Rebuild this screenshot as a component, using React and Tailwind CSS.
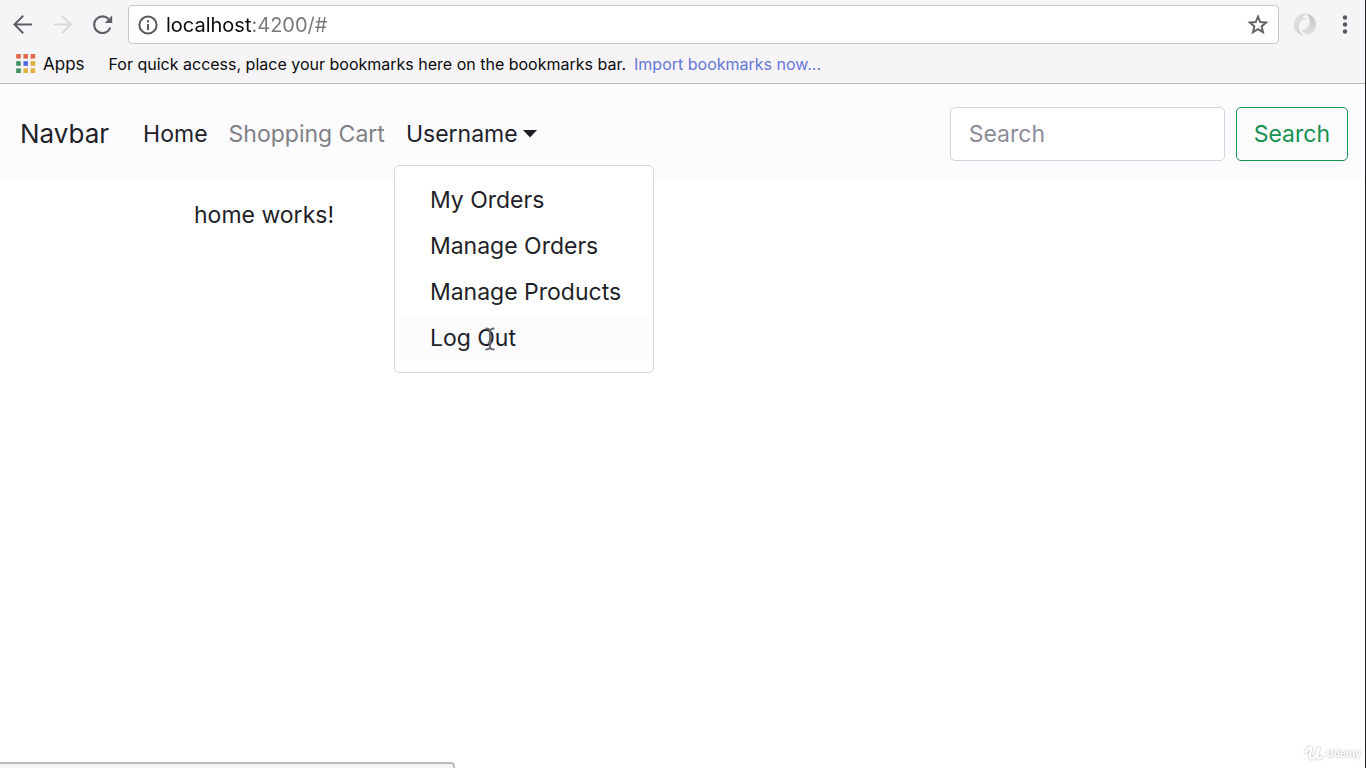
import React from "react";

const APP_DOTS = [
  ["#e0694a", "#e0694a", "#e0694a"],
  ["#3f8f63", "#4b6be0", "#e0b03c"],
  ["#3f8f63", "#e0b03c", "#e0b03c"],
];

const MENU_ITEMS = ["My Orders", "Manage Orders", "Manage Products"];

function BackIcon() {
  return (
    <svg width="22" height="22" viewBox="0 0 22 22" fill="none" stroke="currentColor" strokeWidth="2" aria-hidden="true">
      <path d="M20 10.500H3M11.2 1.800L2.5 10.500l8.7 8.7" />
    </svg>
  );
}

function ForwardIcon() {
  return (
    <svg width="22" height="22" viewBox="0 0 22 22" fill="none" stroke="currentColor" strokeWidth="2" aria-hidden="true">
      <path d="M1.500 10.500h17M10 1.800l8.7 8.7-8.7 8.7" />
    </svg>
  );
}

function ReloadIcon() {
  return (
    <svg width="22" height="22" viewBox="0 0 22 22" fill="none" aria-hidden="true">
      <path d="M18.3 13.500A8.3 8.3 0 1 1 16.500 5" stroke="currentColor" strokeWidth="2.1" />
      <path d="M20.2 1.500V9h-7.500z" fill="currentColor" />
    </svg>
  );
}

function InfoIcon() {
  return (
    <svg width="20" height="20" viewBox="0 0 20 20" fill="none" stroke="#5a5a5e" strokeWidth="2" aria-hidden="true">
      <circle cx="10" cy="10" r="8.6" />
      <path d="M10 9v6M10 5.2v2.2" />
    </svg>
  );
}

function StarIcon() {
  return (
    <svg width="22" height="22" viewBox="0 0 22 22" fill="none" stroke="#646468" strokeWidth="2" aria-hidden="true">
      <path d="M11 2.700l2.25 5.4 5.85.5-4.45 3.85 1.35 5.7-5-3.05-5 3.05 1.35-5.7L2.9 8.600l5.85-.5z" />
    </svg>
  );
}

function ExtensionIcon() {
  return (
    <svg width="24" height="24" viewBox="0 0 24 24" aria-hidden="true">
      <defs>
        <linearGradient id="ringLight" x1="0" y1="0" x2="1" y2="1">
          <stop offset="0" stopColor="#e6e5e7" />
          <stop offset="1" stopColor="#c9c8cb" />
        </linearGradient>
        <linearGradient id="ringDark" x1="0" y1="0" x2="0" y2="1">
          <stop offset="0" stopColor="#c3c2c5" />
          <stop offset="1" stopColor="#e2e1e3" />
        </linearGradient>
      </defs>
      <path d="M11.500 .5C5 .7 .8 5.500 .8 11.500c0 5 3 9 7.500 10.600 1.500.4 1.500-.3.500-1C5.500 18 5.200 12.500 7.500 9c2-3 4.500-3.500 6.500-2.500-.5-1.500-3-2-5-1.200C10 3 12 1.500 14 1.500c-1-.7-1.700-1-2.500-1z" fill="url(#ringLight)" />
      <path d="M14 .8C19.500 2 23 6 23 11.500c0 6-4 10-9.500 10.500-1.500.1-3-.2-4-.7 1.500.3 3-.1 4-1.100-3-.2-5-2-5.500-4.700 1.500 1.500 3.800 1.700 5.500.2 2.800-2.400 3.600-5.500 3-9C16 4.200 15.500 2.500 14 .8z" fill="url(#ringDark)" />
    </svg>
  );
}

function MenuDotsIcon() {
  return (
    <svg width="6" height="20" viewBox="0 0 6 20" fill="#5a5a5e" aria-hidden="true">
      <circle cx="3" cy="2.500" r="2.200" />
      <circle cx="3" cy="9.500" r="2.200" />
      <circle cx="3" cy="16.500" r="2.200" />
    </svg>
  );
}

function AppsIcon() {
  return (
    <svg width="20" height="20" viewBox="0 0 20 20" aria-hidden="true">
      {APP_DOTS.map((row, y) =>
        row.map((color, x) => (
          <rect key={`${x}-${y}`} x={x * 7.2 + 0.2} y={y * 7.2} width="4.600" height="4.600" fill={color} />
        ))
      )}
    </svg>
  );
}

function TextCursor() {
  return (
    <svg className="pointer-events-none absolute top-3 left-[89px]" width="12" height="24" viewBox="0 0 12 24" fill="none" aria-hidden="true">
      <path d="M1.500 1.500c2.500 0 4 .8 4.500 2 .5-1.200 2-2 4.500-2M6 3.500v17M1.500 22.500c2.500 0 4-.8 4.500-2 .5 1.200 2 2 4.500 2M3.800 15.500h4.400" stroke="#66666b" strokeWidth="1.900" />
    </svg>
  );
}

function BrowserChrome() {
  return (
    <header className="border-b border-[#b9b7ba] bg-[#f6f4f7]">
      <div className="flex items-center pt-[5px] pr-[17px] pl-3">
        <div className="flex items-center gap-[18px] pr-[14px] text-[#5f5f63]">
          <button type="button" aria-label="Back"><BackIcon /></button>
          <button type="button" aria-label="Forward" disabled className="text-[#d8d7da]"><ForwardIcon /></button>
          <button type="button" aria-label="Reload"><ReloadIcon /></button>
        </div>
        <div className="flex h-[39px] flex-1 items-center rounded border border-[#c9c7ca] bg-white pr-[9px] pl-[9px]">
          <InfoIcon />
          <input
            type="text"
            aria-label="Address"
            defaultValue="localhost:4200/#"
            className="ml-2 h-8 min-w-0 flex-1 bg-[linear-gradient(90deg,#0b0b0e_86px,#77777b_86px)] bg-clip-text text-[20px] leading-8 text-transparent outline-none"
          />
          <button type="button" aria-label="Bookmark this page"><StarIcon /></button>
        </div>
        <div className="flex items-center gap-[25px] pl-[14px]">
          <button type="button" aria-label="Extension"><ExtensionIcon /></button>
          <button type="button" aria-label="Browser menu"><MenuDotsIcon /></button>
        </div>
      </div>
      <div className="flex h-[39px] items-center pl-4 text-[16px] leading-5 text-[#0b0b0e]">
        <button type="button" className="flex items-center gap-[7px] text-[17px]">
          <AppsIcon />
          Apps
        </button>
        <span className="ml-6">For quick access, place your bookmarks here on the bookmarks bar.</span>
        <a href="#import" className="ml-2 text-[#6577d6]">Import bookmarks now...</a>
      </div>
    </header>
  );
}

function Navbar() {
  return (
    <nav className="flex items-center bg-[#fcfbfe] pt-[23px] pr-[17px] pb-[21px] pl-5">
      <a href="#" className="text-[26px] leading-9">Navbar</a>
      <ul className="ml-[34px] flex items-center gap-[21px]">
        <li><a href="#home">Home</a></li>
        <li><a href="#cart" className="text-[#808086]">Shopping Cart</a></li>
        <li className="relative">
          <button type="button" aria-haspopup="menu" aria-expanded="true" className="flex items-center gap-[5px]">
            Username
            <svg width="14" height="8" viewBox="0 0 14 8" fill="currentColor" aria-hidden="true"><path d="M0 0h14L7 7.500z" /></svg>
          </button>
          <ul className="absolute top-[48px] -left-3 z-10 w-[260px] rounded-[5px] border border-[#d9d8dc] bg-white py-[11px]">
            {MENU_ITEMS.map((item) => (
              <li key={item}><a href="#menu" className="block px-[35px] py-[6px] leading-[34px] whitespace-nowrap">{item}</a></li>
            ))}
            <li className="relative bg-[#fcfbfe]">
              <a href="#logout" className="block px-[35px] py-[6px] leading-[34px] whitespace-nowrap">Log Out</a>
              <TextCursor />
            </li>
          </ul>
        </li>
      </ul>
      <form className="ml-auto flex items-center gap-[11px]">
        <input
          type="search"
          aria-label="Search"
          placeholder="Search"
          className="h-[54px] w-[275px] rounded-[5px] border border-[#d4d3d8] bg-white px-[18px] outline-none placeholder:text-[#8c8c99]"
        />
        <button type="button" className="h-[54px] rounded-[5px] border border-[#159150] px-[17px] text-[#159150]">Search</button>
      </form>
    </nav>
  );
}

function Watermark() {
  return (
    <div className="fixed right-[5px] bottom-[6px] flex items-center gap-[3px] text-[10px] leading-[18px] font-bold text-white drop-shadow-[0_0_1px_#a9a8ae]">
      <svg width="19" height="16" viewBox="0 0 19 16" fill="none" stroke="white" strokeLinecap="round" strokeLinejoin="round" strokeWidth="2.500" aria-hidden="true">
        <path d="M1.500 7C3.500 5.500 4.500 2.500 6.500 2c1.500 0-.5 6-.5 9 0 4 4.500 3 6.500-1 1.500-3 2-5 2.500-7-1 4-2.500 7.500-1.500 9.500 1 1.500 3 1 4-.5" />
      </svg>
      <span>Udemy</span>
    </div>
  );
}

export default function App() {
  return (
    <div className="min-h-screen border-r border-[#1e1e25] bg-white font-['Inter','Liberation_Sans',sans-serif] text-[23px] leading-[34px] text-[#1f1f29]">
      <BrowserChrome />
      <Navbar />
      <main className="pt-4 pl-[194px]">
        <p>home works!</p>
      </main>
      <div className="fixed bottom-0 left-0 h-[6px] w-1/3 rounded-tr border-t-2 border-r-2 border-[#bdbbc0] bg-[#f6f4f7]" />
      <Watermark />
    </div>
  );
}
